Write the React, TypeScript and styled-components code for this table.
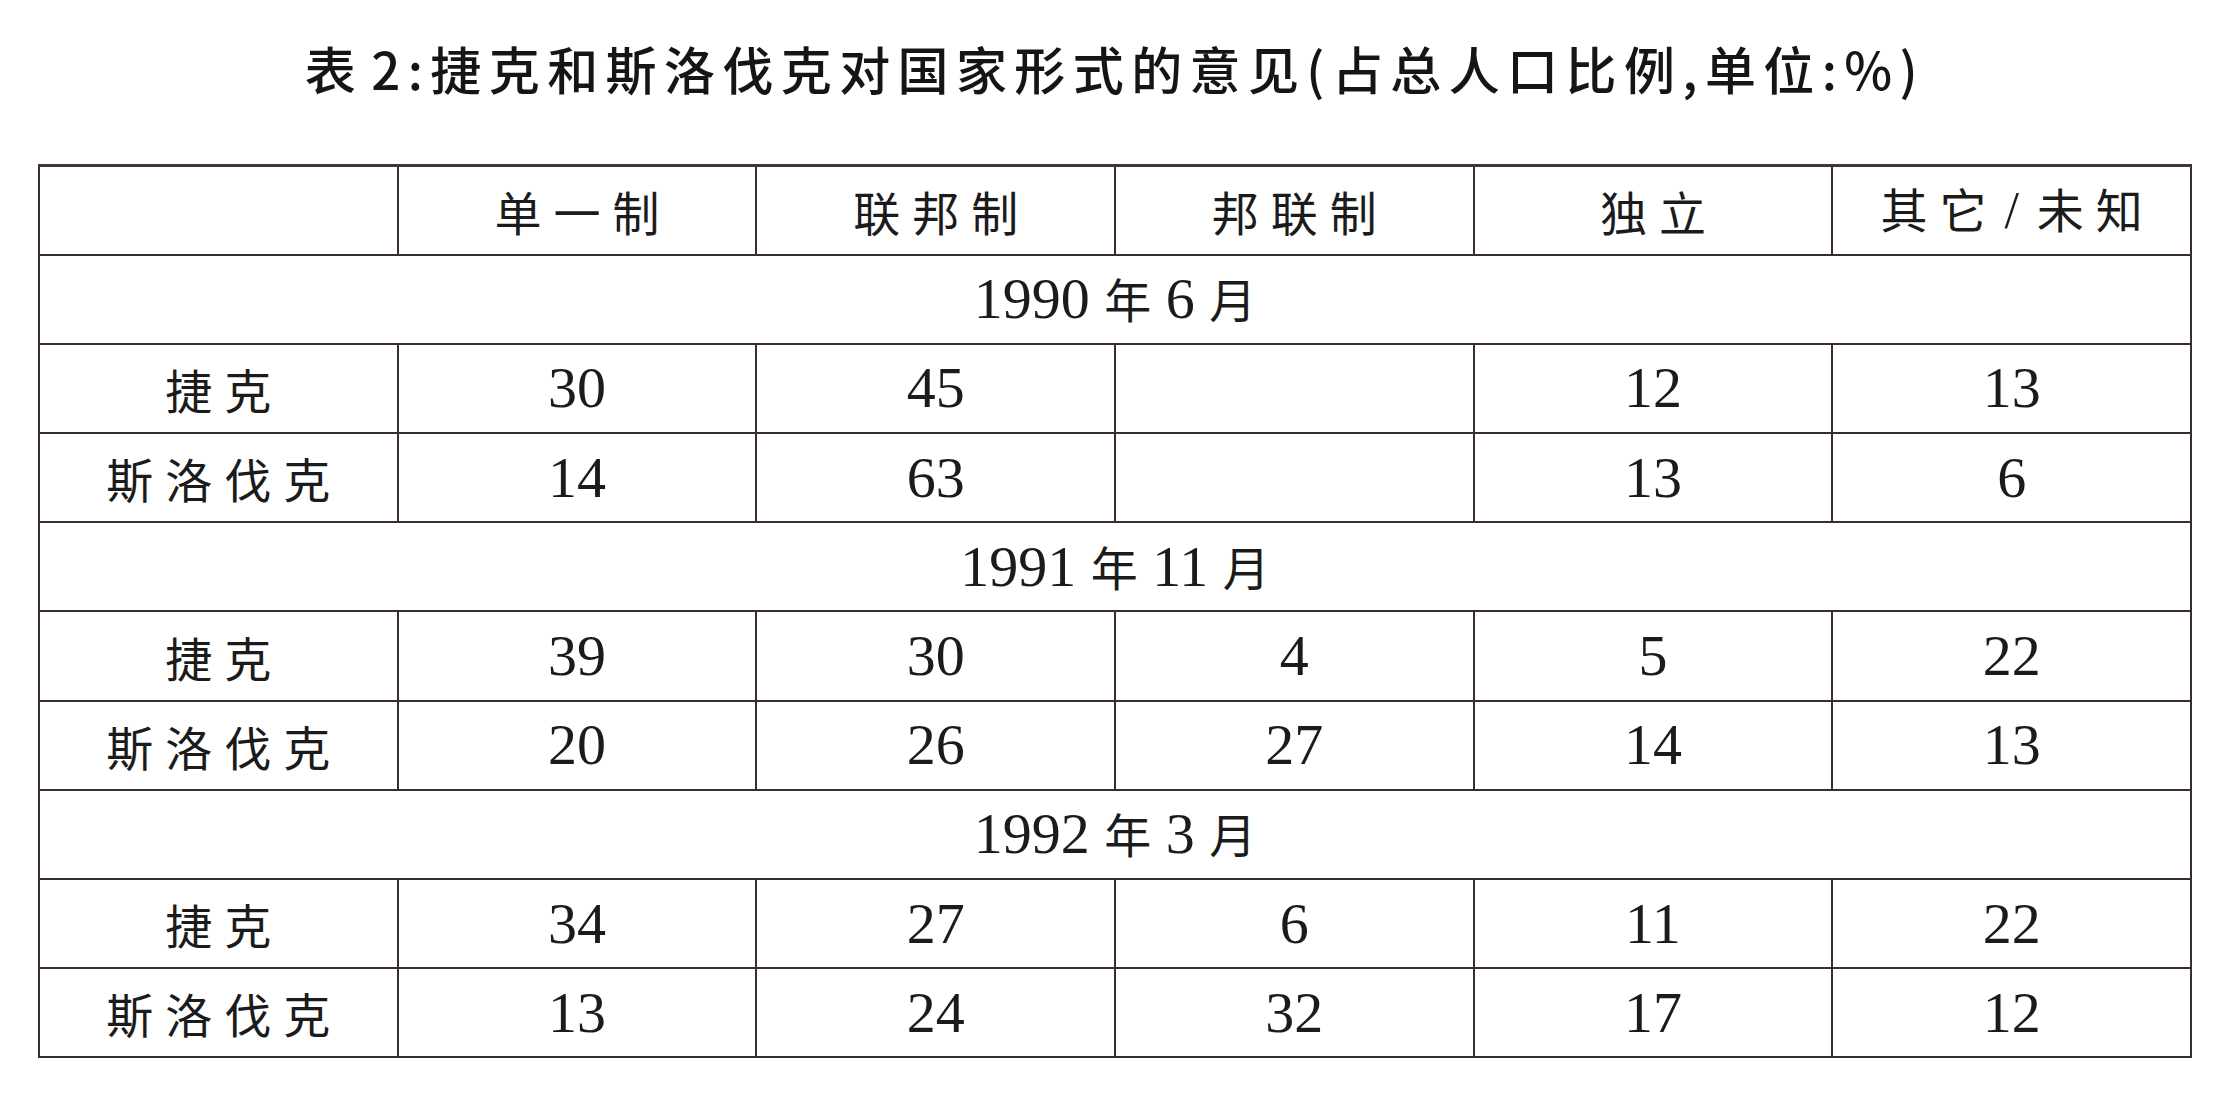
import React from "react";
import styled, { createGlobalStyle } from "styled-components";

const Global = createGlobalStyle`
  html, body {
    margin: 0;
    padding: 0;
    background: #ffffff;
  }
  body {
    font-family: "Liberation Serif", "Noto Sans CJK SC", serif;
    color: #1b1b1b;
  }
`;

const Page = styled.main`
  width: 2238px;
  height: 1110px;
  box-sizing: border-box;
  padding: 38px 46px 0 38px;
  display: flex;
  flex-direction: column;
  align-items: center;
`;

const Title = styled.h1`
  margin: 0 0 66px 0;
  height: 60px;
  line-height: 60px;
  font-family: "Noto Sans CJK SC", "Noto Sans", sans-serif;
  font-weight: 500;
  font-size: 51px;
  letter-spacing: 7.4px;
  color: #151515;
  white-space: nowrap;
`;

const Digit = styled.span`
  margin-left: 8px;
`;

const Table = styled.table`
  width: 2154px;
  align-self: flex-start;
  border-collapse: collapse;
  table-layout: fixed;
  border-top: 3px solid #47332f;
`;

const Row = styled.tr`
  height: 89.2px;
`;

const Cell = styled.td<{ $cjk?: boolean }>`
  border: 2px solid #3a2d2b;
  padding: 0;
  text-align: center;
  vertical-align: middle;
  white-space: nowrap;
  font-family: ${(p) =>
    p.$cjk
      ? '"Noto Sans CJK SC", "Liberation Serif", sans-serif'
      : '"Liberation Serif", "Noto Sans CJK SC", serif'};
  font-size: ${(p) => (p.$cjk ? "47px" : "58px")};
  font-weight: 400;
  letter-spacing: ${(p) => (p.$cjk ? "12px" : "0")};
  text-indent: ${(p) => (p.$cjk ? "12px" : "0")};
  line-height: 1;
  color: #1b1b1b;
`;

const YearCell = styled.td`
  border: 2px solid #3a2d2b;
  padding: 0;
  text-align: center;
  vertical-align: middle;
  white-space: nowrap;
  font-family: "Liberation Serif", "Noto Sans CJK SC", serif;
  font-size: 58px;
  line-height: 1;
  color: #1b1b1b;
`;

const Han = styled.span`
  font-family: "Noto Sans CJK SC", sans-serif;
  font-size: 47px;
`;

const Slash = styled.span`
  font-family: "Liberation Serif", serif;
  font-size: 52px;
  letter-spacing: 0;
  margin: 0 18px 0 6px;
`;

const headers = ["单一制", "联邦制", "邦联制", "独立"];

type Group = {
  year: string;
  month: string;
  rows: { name: string; values: (number | null)[] }[];
};

const groups: Group[] = [
  {
    year: "1990",
    month: "6",
    rows: [
      { name: "捷克", values: [30, 45, null, 12, 13] },
      { name: "斯洛伐克", values: [14, 63, null, 13, 6] },
    ],
  },
  {
    year: "1991",
    month: "11",
    rows: [
      { name: "捷克", values: [39, 30, 4, 5, 22] },
      { name: "斯洛伐克", values: [20, 26, 27, 14, 13] },
    ],
  },
  {
    year: "1992",
    month: "3",
    rows: [
      { name: "捷克", values: [34, 27, 6, 11, 22] },
      { name: "斯洛伐克", values: [13, 24, 32, 17, 12] },
    ],
  },
];

export default function App() {
  return (
    <>
      <Global />
      <Page>
        <Title>
          表<Digit>2</Digit>:捷克和斯洛伐克对国家形式的意见(占总人口比例,单位:%)
        </Title>
        <Table>
          <tbody>
            <Row>
              <Cell $cjk />
              {headers.map((h) => (
                <Cell $cjk key={h}>
                  {h}
                </Cell>
              ))}
              <Cell $cjk>
                其它<Slash>/</Slash>未知
              </Cell>
            </Row>
            {groups.map((g) => (
              <React.Fragment key={g.year}>
                <Row>
                  <YearCell colSpan={6}>
                    {g.year} <Han>年</Han> {g.month} <Han>月</Han>
                  </YearCell>
                </Row>
                {g.rows.map((r) => (
                  <Row key={r.name}>
                    <Cell $cjk>{r.name}</Cell>
                    {r.values.map((v, i) => (
                      <Cell key={i}>{v === null ? "" : v}</Cell>
                    ))}
                  </Row>
                ))}
              </React.Fragment>
            ))}
          </tbody>
        </Table>
      </Page>
    </>
  );
}
